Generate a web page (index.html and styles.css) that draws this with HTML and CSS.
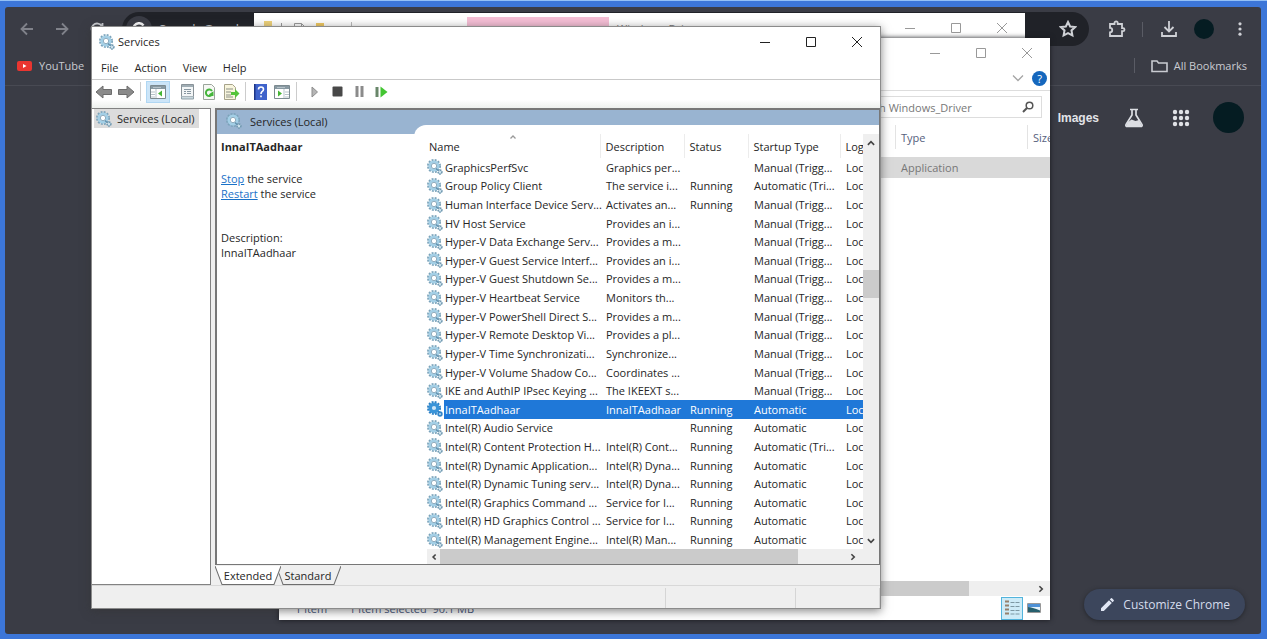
FILE: index.html
```html
<!DOCTYPE html>
<html lang="en">
<head>
<meta charset="utf-8">
<title>Services</title>
<link rel="stylesheet" href="styles.css">
</head>
<body>
<svg class="defs" aria-hidden="true">
  <symbol id="gear" viewBox="0 0 16 16">
    <circle cx="7" cy="7" r="6" fill="none" stroke="#7ba3ba" stroke-width="2" stroke-dasharray="1.9 1.24"/>
    <circle cx="7" cy="7" r="4.2" fill="#f4f9fc" stroke="#a3cfe6" stroke-width="2.6"/>
    <circle cx="7" cy="7" r="2.7" fill="#fff" stroke="#7297ad" stroke-width=".8"/>
    <path d="M9 9.500l2 2" stroke="#5f8eab" stroke-width="1.200"/>
    <circle cx="13" cy="13" r="1.9" fill="#d4e8f2" stroke="#7199b1" stroke-width="1.600" stroke-dasharray="1.4 .6"/>
  </symbol>
  <symbol id="gear-on" viewBox="0 0 16 16">
    <circle cx="7" cy="7" r="6" fill="none" stroke="#2b7fc4" stroke-width="2" stroke-dasharray="1.9 1.24"/>
    <circle cx="7" cy="7" r="3.8" fill="#cfe6f7" stroke="#3a94d8" stroke-width="3.4"/>
    <circle cx="13" cy="13" r="1.9" fill="#a9d2f0" stroke="#3386c9" stroke-width="1.600"/>
  </symbol>
  <symbol id="min" viewBox="0 0 12 12"><path d="M1 6.5h10" fill="none" stroke="currentColor"/></symbol>
  <symbol id="max" viewBox="0 0 12 12"><path d="M1.5 1.5h9v9h-9z" fill="none" stroke="currentColor"/></symbol>
  <symbol id="close" viewBox="0 0 12 12"><path d="M1 1l10 10M11 1L1 11" fill="none" stroke="currentColor"/></symbol>
  <symbol id="up" viewBox="0 0 8 8"><path d="M1.5 5.5L4 3l2.5 2.5" fill="none" stroke="currentColor" stroke-width="1.3"/></symbol>
  <symbol id="down" viewBox="0 0 8 8"><path d="M1.5 2.5L4 5l2.5-2.5" fill="none" stroke="currentColor" stroke-width="1.3"/></symbol>
  <symbol id="left" viewBox="0 0 8 8"><path d="M5.300 2L3.300 4l2 2" fill="none" stroke="currentColor" stroke-width="1.3"/></symbol>
  <symbol id="right" viewBox="0 0 8 8"><path d="M2.700 1.800L5 4 2.700 6.200" fill="none" stroke="currentColor" stroke-width="1.3"/></symbol>
</svg>

<div class="desktop">
  <div class="browser">
    <header class="nav">
      <button class="ic dim" aria-label="Back"><svg width="14" height="14" viewBox="0 0 14 14"><path d="M13 7H2M7 1.500L1.500 7 7 12.500"/></svg></button>
      <button class="ic dim" aria-label="Forward"><svg width="14" height="14" viewBox="0 0 14 14"><path d="M1 7h11M7 1.500L12.500 7 7 12.500"/></svg></button>
      <button class="ic" aria-label="Reload"><svg width="14" height="14" viewBox="0 0 14 14"><path d="M12 4.500A5.500 5.500 0 1 0 12.500 8M12.500 1v4h-4"/></svg></button>
      <div class="omnibox">
        <span class="gbadge"><svg width="14" height="14" viewBox="0 0 14 14"><path d="M11.500 3.500A5.500 5.500 0 1 0 12.500 7H7.500"/></svg></span>
        <span class="query">Search Google</span>
        <button class="ic star" aria-label="Bookmark"><svg width="18" height="18" viewBox="0 0 16 16"><path d="M8 1.800l1.900 4 4.400.5-3.200 3 .8 4.400L8 11.600l-3.900 2.100.8-4.400-3.200-3 4.400-.5z"/></svg></button>
      </div>
      <button class="ic" aria-label="Extensions"><svg width="18" height="18" viewBox="0 0 18 18"><path d="M2 4h4.500V3a1.600 1.600 0 0 1 3.200 0v1H14v4.200h1a1.500 1.500 0 0 1 0 3h-1V16H2v-3.600c3 0 3-4.600 0-4.600z"/></svg></button>
      <span class="sep"></span>
      <button class="ic" aria-label="Downloads"><svg width="18" height="18" viewBox="0 0 18 18"><path d="M9 1v10M4.500 7L9 11.500 13.500 7M2 12v4h14v-4"/></svg></button>
      <button class="avatar small" aria-label="Profile"></button>
      <button class="ic more" aria-label="Menu"><svg width="16" height="16" viewBox="0 0 16 16"><g class="solid"><circle cx="8" cy="2.800" r="1.600"/><circle cx="8" cy="8" r="1.600"/><circle cx="8" cy="13.200" r="1.600"/></g></svg></button>
    </header>
    <div class="bookmarks">
      <a href="#" class="bm"><svg width="16" height="12" viewBox="0 0 16 12"><rect y="1" width="15" height="10" rx="2" fill="#ea3530"/><path d="M6 4v4l3.500-2z" fill="#fff"/></svg>YouTube</a>
      <span class="sep end"></span>
      <a href="#" class="bm"><svg class="line" width="17" height="14" viewBox="0 0 17 14"><path d="M1 2h5l1.500 2H16v8.500H1z"/></svg>All Bookmarks</a>
    </div>
    <main class="page">
      <a href="#" class="images">Images</a>
      <svg class="flask" width="20" height="20" viewBox="0 0 20 20"><path d="M6 1.500h8M8 2v5L2 16.500q-.7 2 1.500 2h13q2.200 0 1.500-2L12 7V2" fill="none" stroke="#dcdee3" stroke-width="1.700"/><path d="M3.500 14.500l4-3 4 1.500 3.500-1 3 6.500h-16z" fill="#dcdee3"/></svg>
      <svg class="apps" width="18" height="18" viewBox="0 0 18 18" fill="#e0e2e6"><circle cx="3" cy="3" r="2.200"/><circle cx="9" cy="3" r="2.200"/><circle cx="15" cy="3" r="2.200"/><circle cx="3" cy="9" r="2.200"/><circle cx="9" cy="9" r="2.200"/><circle cx="15" cy="9" r="2.200"/><circle cx="3" cy="15" r="2.200"/><circle cx="9" cy="15" r="2.200"/><circle cx="15" cy="15" r="2.200"/></svg>
      <button class="avatar" aria-label="Account"></button>
    </main>
    <button class="customize"><svg width="14" height="14" viewBox="0 0 14 14" fill="#e1e7f5"><path d="M1 10.200L9 2.200l2.800 2.800-8 8H1zM9.800 1.400L11 .3q.5-.4 1 0l1.700 1.700q.4.5 0 1l-1.100 1.200z"/></svg>Customize Chrome</button>
  </div>

  <section class="window explorer-back">
    <div class="quick">
      <svg width="74" height="16" viewBox="0 0 74 16"><path d="M0 1h8v8H0z" fill="#efd27a"/><path d="M17.500 3v8" stroke="#999"/><path d="M30.500 12V3.500h7l4 4V12M37.500 3.500v4h4" fill="none" stroke="#999"/><path d="M52 3h8v9h-8z" fill="#f0c85f"/></svg>
    </div>
    <span class="divider"></span>
    <div class="tooltab"></div>
    <span class="caption">Windows_Driver</span>
    <div class="controls"><button aria-label="Minimize"><svg><use href="#min"/></svg></button><button aria-label="Maximize"><svg><use href="#max"/></svg></button><button aria-label="Close"><svg><use href="#close"/></svg></button></div>
  </section>

  <section class="window explorer">
    <div class="controls"><button aria-label="Minimize"><svg><use href="#min"/></svg></button><button aria-label="Maximize"><svg><use href="#max"/></svg></button><button aria-label="Close"><svg><use href="#close"/></svg></button></div>
    <div class="ribbon"><svg width="12" height="8" viewBox="0 0 12 8"><path d="M1 1.500l5 5 5-5" fill="none" stroke="#a5a5a5" stroke-width="1.300"/></svg><button class="help" aria-label="Help">?</button></div>
    <div class="address"><div class="search"><input type="text" aria-label="Search" value="Search Windows_Driver"><svg width="12" height="12" viewBox="0 0 12 12"><path d="M1 11l4.200-4.200" stroke="#555" stroke-width="2"/><circle cx="7.500" cy="4.500" r="3.300" fill="none" stroke="#555" stroke-width="1.500"/></svg></div></div>
    <table class="files">
      <colgroup><col><col class="c-type"><col class="c-size"></colgroup>
      <thead><tr><th></th><th>Type</th><th>Size</th></tr></thead>
      <tbody><tr><td></td><td>Application</td><td></td></tr></tbody>
    </table>
    <div class="space"></div>
    <div class="hbar"><span class="thumb"></span><button aria-label="Scroll right"><svg><use href="#right"/></svg></button></div>
    <footer class="info"><span>1 item</span><span class="picked">1 item selected&nbsp; 90.1 MB</span>
      <button class="view on" aria-label="Details"><svg width="16" height="16" viewBox="0 0 16 16"><path d="M1 1.500h4M1 5.500h4M1 9.500h4M1 13.500h4" stroke="#95806b" stroke-width="2"/><path d="M6.500 2.500h4M11.500 2.500h4M6.500 6.500h4M11.500 6.500h4M6.500 10.500h4M11.500 10.500h4M6.500 14h4M11.500 14h4" stroke="#7d98a3"/></svg></button>
      <button class="view" aria-label="Large icons"><svg width="14" height="10" viewBox="0 0 14 10"><path d="M.5.500h13v9H.5z" fill="#e8f4fb" stroke="#999"/><path d="M1 1h12v3H1z" fill="#4e91d6"/><path d="M1 4q4 0 12 3.500V9H1z" fill="#265f6d"/></svg></button>
    </footer>
  </section>

  <section class="window services">
    <header class="title"><svg class="g"><use href="#gear"/></svg><h1>Services</h1>
      <div class="controls"><button aria-label="Minimize"><svg><use href="#min"/></svg></button><button aria-label="Maximize"><svg><use href="#max"/></svg></button><button aria-label="Close"><svg><use href="#close"/></svg></button></div>
    </header>
    <nav class="menu"><button>File</button><button>Action</button><button>View</button><button>Help</button></nav>
    <div class="tools">
      <button aria-label="Back"><svg width="18" height="14" viewBox="0 0 18 14"><path d="M1 7l7-6v3.500h8.500v5H8V13z" fill="#8b8b8b" stroke="#6d6d6d"/></svg></button>
      <button aria-label="Forward"><svg width="18" height="14" viewBox="0 0 18 14"><path d="M17 7l-7-6v3.500H1.500v5H10V13z" fill="#8b8b8b" stroke="#6d6d6d"/></svg></button>
      <i class="bar"></i>
      <button class="on" aria-label="Show console tree"><svg width="16" height="14" viewBox="0 0 16 14"><path d="M.5.500h15v13H.5z" fill="#fff" stroke="#7c8a90"/><path d="M1 1h14v3H1z" fill="#8899a2"/><path d="M3 2.500h8M6 4v9M1 7h4M1 9.500h4M1 12h4" stroke="#b7c3c9"/><path d="M12 5.500v6L8 8.500z" fill="#46b535"/></svg></button>
      <button class="first" aria-label="Properties"><svg width="15" height="16" viewBox="0 0 15 16"><path d="M1.500.500h12v12h-12z" fill="#f3f6f7" stroke="#899298"/><path d="M2 2h11" stroke="#a0adb4" stroke-width="2"/><path d="M4 5.500h7M4 7.500h2M7 7.500h4M4 9.500h2M7 9.500h4" stroke="#8796a0"/><path d="M1.500 12.500v2.500h12v-2.500" fill="#cbd9df" stroke="#8fa0a8"/></svg></button>
      <button aria-label="Refresh"><svg width="14" height="16" viewBox="0 0 14 16"><path d="M1.500.500h8l3 3v12h-11z" fill="#f6f8f4" stroke="#9ba59b"/><path d="M10 10.500A3.300 3.300 0 1 1 10 7M10.500 12V9L7.500 11" fill="none" stroke="#45b53b" stroke-width="2"/></svg></button>
      <button aria-label="Export list"><svg width="17" height="16" viewBox="0 0 17 16"><path d="M1.500.500h8l3 3v12h-11z" fill="#f8f5dd" stroke="#a7a38a"/><path d="M3 5h7M3 8h5M3 11h5M3 13h7" stroke="#8d9187"/><path d="M8 8h4V5l4.500 4.500L12 14v-3H8z" fill="#55c43a"/></svg></button>
      <i class="bar"></i>
      <button aria-label="Help"><svg width="13" height="16" viewBox="0 0 13 16"><path d="M0 0h13v16H0z" fill="#3f63cb"/><path d="M.5 0v16" stroke="#1e3687" stroke-width="2"/><path d="M4.500 5.500q0-2.500 2.500-2.500t2.500 2.300q0 1.400-1.500 2.400-1 .8-1 2.300M7 11.500v1.800" fill="none" stroke="#fff" stroke-width="1.600"/></svg></button>
      <button aria-label="Show action pane"><svg width="16" height="14" viewBox="0 0 16 14"><path d="M.5.500h15v13H.5z" fill="#fff" stroke="#7c8a90"/><path d="M1 1h14v3H1z" fill="#8899a2"/><path d="M3 2.500h8M10 4v9M11 7h4M11 9.500h4M11 12h4" stroke="#b7c3c9"/><path d="M4 5.500v6l4-3z" fill="#46b535"/></svg></button>
      <i class="bar"></i>
      <button class="first" aria-label="Start"><svg width="8" height="12" viewBox="0 0 8 12"><path d="M1 1l5.500 5L1 11z" fill="#b5b5b5" stroke="#8d8d8d"/></svg></button>
      <button aria-label="Stop"><svg width="11" height="11" viewBox="0 0 11 11"><rect width="10" height="10" x=".5" y=".5" rx="1" fill="#484848"/></svg></button>
      <button aria-label="Pause"><svg width="9" height="11" viewBox="0 0 9 11"><path d="M.5 0h3v11h-3zM5.500 0h3v11h-3z" fill="#8b8b8b"/></svg></button>
      <button aria-label="Restart"><svg width="13" height="12" viewBox="0 0 13 12"><path d="M.5 1h3v10h-3z" fill="#69876a"/><path d="M5.500.500l7 5.500-7 5.500z" fill="#43c532"/></svg></button>
    </div>
    <div class="body">
      <aside class="tree"><button class="node"><svg class="g"><use href="#gear"/></svg><span>Services (Local)</span></button></aside>
      <div class="work">
        <div class="panel">
          <div class="detail">
            <h2><svg class="g"><use href="#gear"/></svg>Services (Local)</h2>
            <h3>InnaITAadhaar</h3>
            <p><a href="#">Stop</a> the service<br><a href="#">Restart</a> the service</p>
            <p class="desc">Description:<br>InnaITAadhaar</p>
          </div>
          <div class="list">
            <div class="scroller">
              <div class="viewport">
                <table class="svc">
                  <colgroup><col class="c-icon"><col><col class="c-desc"><col class="c-stat"><col class="c-start"><col class="c-log"></colgroup>
                  <thead><tr><th colspan="2">Name<svg class="sort"><use href="#up"/></svg></th><th>Description</th><th>Status</th><th>Startup Type</th><th>Log</th></tr></thead>
                  <tbody>
                    <tr><td><svg><use href="#gear"/></svg></td><td>GraphicsPerfSvc</td><td>Graphics per...</td><td></td><td>Manual (Trigg...</td><td>Loc</td></tr>
                    <tr><td><svg><use href="#gear"/></svg></td><td>Group Policy Client</td><td>The service i...</td><td>Running</td><td>Automatic (Tri...</td><td>Loc</td></tr>
                    <tr><td><svg><use href="#gear"/></svg></td><td>Human Interface Device Serv...</td><td>Activates an...</td><td>Running</td><td>Manual (Trigg...</td><td>Loc</td></tr>
                    <tr><td><svg><use href="#gear"/></svg></td><td>HV Host Service</td><td>Provides an i...</td><td></td><td>Manual (Trigg...</td><td>Loc</td></tr>
                    <tr><td><svg><use href="#gear"/></svg></td><td>Hyper-V Data Exchange Serv...</td><td>Provides a m...</td><td></td><td>Manual (Trigg...</td><td>Loc</td></tr>
                    <tr><td><svg><use href="#gear"/></svg></td><td>Hyper-V Guest Service Interf...</td><td>Provides an i...</td><td></td><td>Manual (Trigg...</td><td>Loc</td></tr>
                    <tr><td><svg><use href="#gear"/></svg></td><td>Hyper-V Guest Shutdown Se...</td><td>Provides a m...</td><td></td><td>Manual (Trigg...</td><td>Loc</td></tr>
                    <tr><td><svg><use href="#gear"/></svg></td><td>Hyper-V Heartbeat Service</td><td>Monitors th...</td><td></td><td>Manual (Trigg...</td><td>Loc</td></tr>
                    <tr><td><svg><use href="#gear"/></svg></td><td>Hyper-V PowerShell Direct S...</td><td>Provides a m...</td><td></td><td>Manual (Trigg...</td><td>Loc</td></tr>
                    <tr><td><svg><use href="#gear"/></svg></td><td>Hyper-V Remote Desktop Vi...</td><td>Provides a pl...</td><td></td><td>Manual (Trigg...</td><td>Loc</td></tr>
                    <tr><td><svg><use href="#gear"/></svg></td><td>Hyper-V Time Synchronizati...</td><td>Synchronize...</td><td></td><td>Manual (Trigg...</td><td>Loc</td></tr>
                    <tr><td><svg><use href="#gear"/></svg></td><td>Hyper-V Volume Shadow Co...</td><td>Coordinates ...</td><td></td><td>Manual (Trigg...</td><td>Loc</td></tr>
                    <tr><td><svg><use href="#gear"/></svg></td><td>IKE and AuthIP IPsec Keying ...</td><td>The IKEEXT s...</td><td></td><td>Manual (Trigg...</td><td>Loc</td></tr>
                    <tr class="sel"><td><svg><use href="#gear-on"/></svg></td><td>InnaITAadhaar</td><td>InnaITAadhaar</td><td>Running</td><td>Automatic</td><td>Loc</td></tr>
                    <tr><td><svg><use href="#gear"/></svg></td><td>Intel(R) Audio Service</td><td></td><td>Running</td><td>Automatic</td><td>Loc</td></tr>
                    <tr><td><svg><use href="#gear"/></svg></td><td>Intel(R) Content Protection H...</td><td>Intel(R) Cont...</td><td>Running</td><td>Automatic (Tri...</td><td>Loc</td></tr>
                    <tr><td><svg><use href="#gear"/></svg></td><td>Intel(R) Dynamic Application...</td><td>Intel(R) Dyna...</td><td>Running</td><td>Automatic</td><td>Loc</td></tr>
                    <tr><td><svg><use href="#gear"/></svg></td><td>Intel(R) Dynamic Tuning serv...</td><td>Intel(R) Dyna...</td><td>Running</td><td>Automatic</td><td>Loc</td></tr>
                    <tr><td><svg><use href="#gear"/></svg></td><td>Intel(R) Graphics Command ...</td><td>Service for I...</td><td>Running</td><td>Automatic</td><td>Loc</td></tr>
                    <tr><td><svg><use href="#gear"/></svg></td><td>Intel(R) HD Graphics Control ...</td><td>Service for I...</td><td>Running</td><td>Automatic</td><td>Loc</td></tr>
                    <tr><td><svg><use href="#gear"/></svg></td><td>Intel(R) Management Engine...</td><td>Intel(R) Man...</td><td>Running</td><td>Automatic</td><td>Loc</td></tr>
                  </tbody>
                </table>
              </div>
              <div class="vbar"><button aria-label="Scroll up"><svg><use href="#up"/></svg></button><span class="thumb"></span><button aria-label="Scroll down"><svg><use href="#down"/></svg></button></div>
            </div>
            <div class="hbar"><button aria-label="Scroll left"><svg><use href="#left"/></svg></button><span class="thumb"></span><button aria-label="Scroll right"><svg><use href="#right"/></svg></button></div>
          </div>
        </div>
        <div class="tabs">
          <button class="tab active"><svg viewBox="0 0 66 18" preserveAspectRatio="none"><path d="M0 0L7 17.500H59L66 0" fill="#fff" stroke="#6e6e6e"/></svg><span>Extended</span></button>
          <button class="tab"><svg viewBox="0 0 66 18" preserveAspectRatio="none"><path d="M4 7L8 17.500H59L66 0" fill="none" stroke="#6e6e6e"/></svg><span>Standard</span></button>
        </div>
      </div>
    </div>
    <footer class="status"><span></span><span></span><span></span></footer>
  </section>
</div>
</body>
</html>
```
FILE: styles.css
```css
* { box-sizing: border-box; }
html, body { height: 100%; }
body { margin: 0; font: 11px/15px "Open Sans", "Noto Sans", sans-serif; color: #262626; overflow: hidden; }
button { font: inherit; color: inherit; background: none; border: 0; padding: 0; }
h1, h2, h3, p { margin: 0; font: inherit; }
svg { display: block; flex: none; }
.defs { position: absolute; width: 0; height: 0; }

.desktop { position: relative; height: 100%; padding: 6px 6px 5px 5px; background: #3c76d8; border-top: 1px solid #93c0f6; }

/* Browser */
.browser { height: 100%; display: flex; flex-direction: column; background: #3a3c45; border-radius: 3px; color: #c9cbd1; }
.nav { display: flex; align-items: center; height: 44px; padding: 0 12px; }
.ic { display: flex; align-items: center; justify-content: center; width: 19px; height: 20px; margin-right: 16px; color: #cfd1d6; }
.ic svg { fill: none; stroke: currentColor; stroke-width: 1.8; }
.ic .solid { fill: currentColor; stroke: none; }
.ic.more { margin: 0; }
.dim { color: #80828a; }
.omnibox { flex: 1; display: flex; align-items: center; height: 34px; margin: 0 18px 0 0; padding: 0 4px; border-radius: 17px; background: #202228; font-size: 13px; }
.gbadge { display: flex; align-items: center; justify-content: center; width: 26px; height: 26px; border-radius: 50%; background: #3a3c45; }
.gbadge svg { fill: none; stroke: #fff; stroke-width: 2.4; }
.query { margin-left: 7px; }
.ic.star { margin: 0 8px 0 auto; }
.sep { width: 1px; height: 15px; margin-right: 16px; background: #5a5c65; }
.avatar { width: 31px; height: 31px; border-radius: 50%; background: #051c22; }
.avatar.small { width: 20px; height: 20px; margin-right: 16px; }
.bookmarks { display: flex; align-items: center; height: 35px; padding: 0 14px 5px 12px; border-bottom: 1px solid #484a53; font-size: 11px; }
.bm { display: flex; align-items: center; gap: 6px; color: inherit; text-decoration: none; }
.bm .line { fill: none; stroke: #c9cbd1; stroke-width: 1.6; }
.sep.end { margin-left: auto; }
.page { display: flex; align-items: center; justify-content: flex-end; padding: 16px 17px; }
.images { font: bold 12px/16px "Liberation Sans", Arial, sans-serif; color: #e2e4e8; text-decoration: none; }
.flask { margin-left: 25px; }
.apps { margin: 0 23px 0 28px; }
.customize { display: flex; align-items: center; gap: 9px; height: 31px; margin: auto 16px 14px auto; padding: 0 15px 0 16px; border-radius: 16px; background: #3c465c; color: #d5dcec; font-size: 12px; box-shadow: 0 1px 4px #24262c; }

/* Windows */
.window { position: absolute; display: flex; background: #fff; }
.controls { display: flex; margin-left: auto; color: #999; }
.controls button { display: flex; align-items: center; justify-content: center; width: 46px; height: 29px; }
.controls svg { width: 12px; height: 12px; }

.explorer-back { inset: 12px 242px 60px 254px; align-items: flex-start; }
.quick { padding: 7px 0 0 10px; width: 97px; }
.divider { width: 1px; height: 12px; margin-top: 9px; background: #bbb; }
.tooltab { width: 142px; height: 24px; margin: 4px 8px 0 115px; background: #f5bed5; }
.caption { padding-top: 8px; color: #777; }

.explorer { inset: 37px 217px 19px 279px; flex-direction: column; box-shadow: 0 0 5px #18191e; }
.ribbon { display: flex; align-items: center; justify-content: flex-end; gap: 8px; height: 24px; padding: 0 3px 1px; border-bottom: 1px solid #ddd; }
.help { width: 15px; height: 15px; border-radius: 50%; background: #1567bd; color: #fff; line-height: 15px; }
.address { display: flex; justify-content: flex-end; padding: 5px 8px; }
.search { display: flex; align-items: center; width: 200px; height: 22px; padding-right: 7px; border: 1px solid #ddd; }
.search input { flex: 1; min-width: 0; border: 0; padding: 0 0 0 8px; font: inherit; color: #777; background: none; outline: 0; }
.files { width: 100%; table-layout: fixed; border-collapse: collapse; }
.files th { height: 34px; padding: 0 0 6px 6px; text-align: left; font-weight: normal; color: #56617d; overflow: hidden; background: linear-gradient(#e3e3e3, #e3e3e3) 0 2px / 1px 24px no-repeat; }
.files td { height: 21px; padding: 0 6px; background: #d9d9d9; color: #777; }
.c-type { width: 132px; }
.c-size { width: 23px; }
.space { flex: 1; }
.hbar { display: flex; height: 15px; background: #efefef; color: #444; }
.hbar .thumb { flex: 1; background: #cbcbcb; }
.hbar button, .vbar button { display: flex; align-items: center; justify-content: center; }
.hbar svg, .vbar svg { width: 10px; height: 10px; }
.explorer .hbar button { width: 18px; margin-left: 63px; }
.info { display: flex; align-items: center; height: 24px; padding: 0 5px 0 16px; color: #42527a; }
.picked { margin: 0 auto 0 22px; }
.view { display: flex; align-items: center; justify-content: center; width: 22px; height: 23px; }
.view.on { background: #cdebf7; border: 1px solid #52b4dc; }

.services { inset: 25px 386px 30px 91px; flex-direction: column; background: #efefef; border: 1px solid #8b8b8b; box-shadow: 0 2px 9px #33333399; }
.g { width: 16px; height: 16px; }
.title { display: flex; align-items: center; height: 31px; padding: 0 0 2px 7px; gap: 3px; background: #fff; }
.title .controls { color: #222; }
.menu { display: flex; gap: 16px; height: 22px; padding: 0 9px 2px; background: #fff; border-bottom: 1px solid #c9c9c9; }
.tools { display: flex; align-items: center; height: 28px; padding: 0 4px 5px 3px; gap: 4px; background: linear-gradient(#fff 70%, #edf0ed); }
.tools button { display: flex; align-items: center; justify-content: center; min-width: 18px; height: 22px; }
.tools .on { width: 24px; background: #cce5f8; border: 1px solid #b0d7f3; }
.tools .first { margin-left: 4px; }
.bar { width: 1px; height: 19px; margin: 0 1px; background: #ccc; }
.body { flex: 1; min-height: 0; display: flex; gap: 4px; }
.tree { width: 119px; padding: 0 2px; background: #fff; border: 1px solid #828282; border-left: 0; }
.node { display: flex; align-items: center; gap: 5px; height: 19px; padding: 0 4px 0 2px; background: #dcdcdc; }
.work { flex: 1; min-width: 0; display: flex; flex-direction: column; }
.panel { flex: 1; min-height: 0; display: flex; border: solid #777; border-width: 2px 1px 1px 2px; background: linear-gradient(#99b4d1 24px, #fff 24px); }
.detail { width: 197px; padding-left: 4px; }
.detail h2 { display: flex; align-items: center; gap: 8px; height: 24px; padding: 0 0 2px 5px; }
.detail h3 { margin: 5px 0 17px; font-weight: bold; }
.detail a { color: #1a72c8; }
.desc { margin-top: 29px; }
.list { flex: 1; min-width: 0; display: flex; flex-direction: column; margin-top: 15px; padding: 9px 0 0 13px; background: #fff; border-top-left-radius: 12px; }
.scroller { flex: 1; min-height: 0; display: flex; }
.viewport { flex: 1; min-width: 0; overflow: hidden; }
.svc { width: 100%; height: 100%; table-layout: fixed; border-collapse: collapse; }
.svc th { position: relative; height: 24px; padding: 0 0 0 5px; text-align: left; font-weight: normal; border-left: 1px solid #ececec; }
.svc th:first-child { padding-left: 2px; border: 0; }
.svc th:last-child, .svc td:last-child { overflow: hidden; }
.sort { position: absolute; top: -1px; left: 82px; width: 8px; height: 8px; color: #999; }
.svc td { height: 18px; padding: 0 0 0 6px; line-height: 15px; }
.svc th, .svc td { white-space: nowrap; }
.svc td:first-child { padding: 0; }
.svc td:nth-child(2) { padding-left: 1px; }
.svc td svg { width: 16px; height: 16px; }
.sel td:not(:first-child) { background: #1f78d8; color: #fff; }
.c-icon { width: 17px; }
.c-desc { width: 84px; }
.c-stat { width: 64px; }
.c-start { width: 92px; }
.c-log { width: 23px; }
.vbar { display: flex; flex-direction: column; width: 16px; background: #efefef; color: #444; }
.vbar button { height: 17px; }
.vbar .thumb { height: 28px; margin: 119px 0 auto; background: #cbcbcb; }
.list .hbar .thumb { flex: 358; }
.list .hbar button { width: 13px; }
.list .hbar button:last-child { flex: 60; margin-right: 16px; justify-content: flex-end; padding-right: 5px; }
.tabs { display: flex; height: 20px; padding-top: 1px; }
.tab { position: relative; width: 66px; height: 19px; }
.tab + .tab { margin-left: -6px; }
.tab svg { position: absolute; inset: 0; width: 100%; height: 100%; }
.tab span { position: relative; }
.status { display: flex; height: 23px; border-top: 1px solid #d8d8d8; }
.status span { width: 130px; margin-top: 2px; border-right: 1px solid #d5d5d5; }
.status span:first-child { flex: 1; }
.status span:last-child { width: 84px; }
```
